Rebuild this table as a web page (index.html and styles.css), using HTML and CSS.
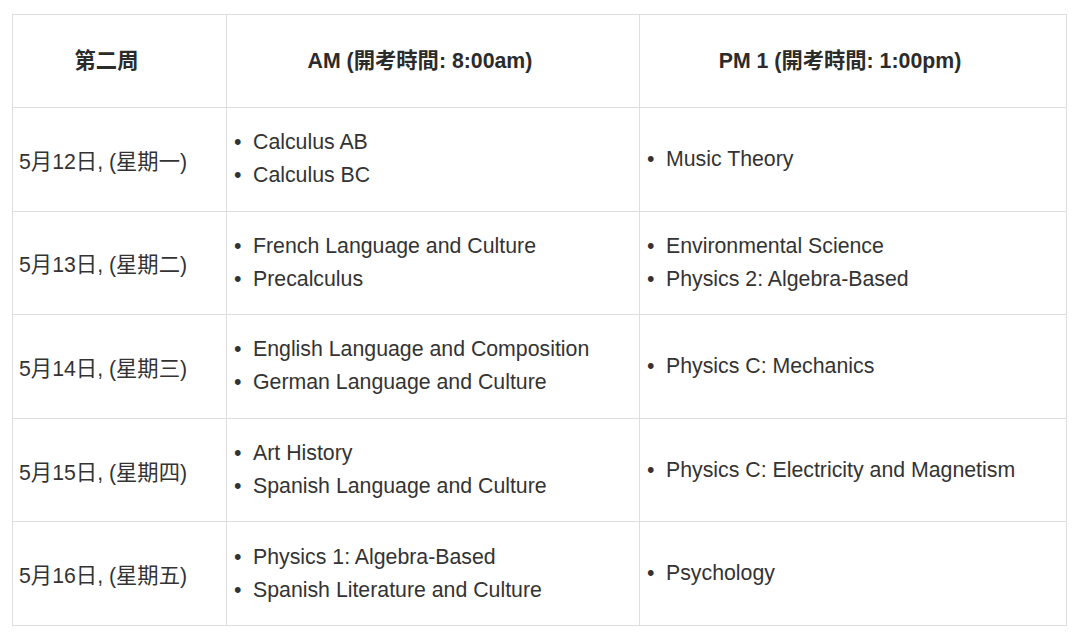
FILE: index.html
```html
<!DOCTYPE html>
<html lang="zh-Hant">
<head>
<meta charset="utf-8">
<link rel="stylesheet" href="styles.css">
</head>
<body>
<table class="schedule">
  <colgroup>
    <col class="c1"><col class="c2"><col class="c3">
  </colgroup>
  <thead>
    <tr class="head">
      <th>第二周</th>
      <th>AM (開考時間: 8:00am)</th>
      <th>PM 1 (開考時間: 1:00pm)</th>
    </tr>
  </thead>
  <tbody>
    <tr class="r">
      <td class="date">5月12日, (星期一)</td>
      <td><ul><li>Calculus AB</li><li>Calculus BC</li></ul></td>
      <td><ul><li>Music Theory</li></ul></td>
    </tr>
    <tr class="r">
      <td class="date">5月13日, (星期二)</td>
      <td><ul><li>French Language and Culture</li><li>Precalculus</li></ul></td>
      <td><ul><li>Environmental Science</li><li>Physics 2: Algebra-Based</li></ul></td>
    </tr>
    <tr class="r">
      <td class="date">5月14日, (星期三)</td>
      <td><ul><li>English Language and Composition</li><li>German Language and Culture</li></ul></td>
      <td><ul><li>Physics C: Mechanics</li></ul></td>
    </tr>
    <tr class="r">
      <td class="date">5月15日, (星期四)</td>
      <td><ul><li>Art History</li><li>Spanish Language and Culture</li></ul></td>
      <td><ul><li>Physics C: Electricity and Magnetism</li></ul></td>
    </tr>
    <tr class="r">
      <td class="date">5月16日, (星期五)</td>
      <td><ul><li>Physics 1: Algebra-Based</li><li>Spanish Literature and Culture</li></ul></td>
      <td><ul><li>Psychology</li></ul></td>
    </tr>
  </tbody>
</table>
</body>
</html>
```
FILE: styles.css
```css
html, body {
  margin: 0;
  padding: 0;
  background: #ffffff;
}
body {
  padding: 14px 0 0 12px;
  font-family: "Liberation Sans", Arial, "Noto Sans CJK TC", sans-serif;
  color: #333333;
}
.schedule {
  border-collapse: collapse;
  table-layout: fixed;
  width: 1054px;
}
.c1 { width: 214px; }
.c2 { width: 413px; }
.c3 { width: 427px; }
.schedule th,
.schedule td {
  border: 1px solid #dedede;
  vertical-align: middle;
  padding: 0 7px;
}
.schedule th {
  height: 93px;
  padding: 0 33px 5px 7px;
  box-sizing: border-box;
  font-size: 21.3px;
  font-weight: bold;
  text-align: center;
  color: #2b2b2b;
}
.schedule td {
  height: 102.6px;
  font-size: 21.3px;
}
.schedule td.date {
  padding-left: 6px;
  font-size: 21.3px;
}
ul {
  list-style: none;
  margin: 0;
  padding: 0;
}
li {
  display: flex;
  line-height: 33px;
}
li::before {
  content: "•";
  width: 19px;
  flex: none;
}
```
